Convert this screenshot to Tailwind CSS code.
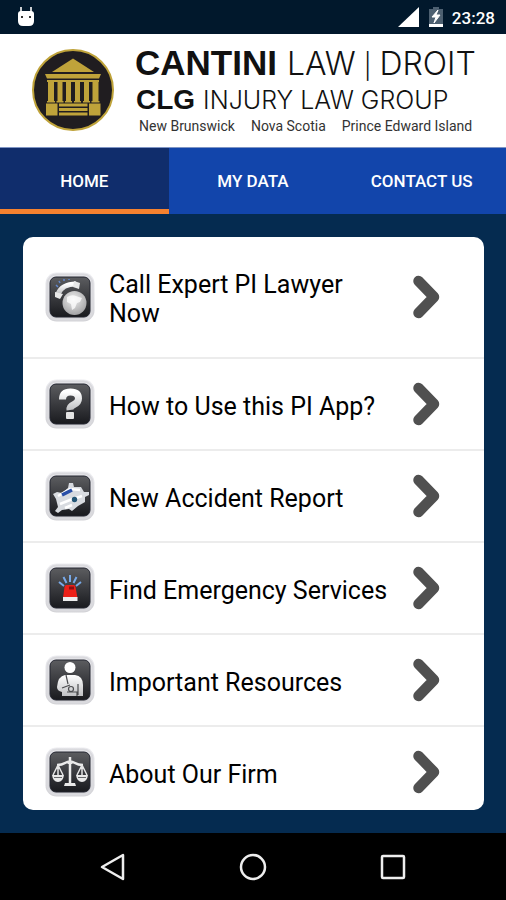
<!DOCTYPE html>
<html lang="en">
<head>
<meta charset="utf-8">
<meta name="viewport" content="width=device-width, initial-scale=1">
<title>Cantini Law</title>
<script src="https://cdn.jsdelivr.net/npm/@tailwindcss/browser@4"></script>
</head>
<body class="h-screen flex flex-col bg-[#052b50] text-black font-['Roboto',sans-serif]">
<svg class="absolute size-0" aria-hidden="true">
  <defs>
    <linearGradient id="rim" x1="0" y1="0" x2="0" y2="1"><stop offset="0" stop-color="#ececf0"/><stop offset="1" stop-color="#d2d2d6"/></linearGradient>
    <linearGradient id="face" x1="0" y1="0" x2="0" y2="1"><stop offset="0" stop-color="#5c5d60"/><stop offset=".48" stop-color="#3b3c40"/><stop offset="1" stop-color="#191a1e"/></linearGradient>
    <linearGradient id="silver" x1="0" y1="0" x2="0" y2="1"><stop offset="0" stop-color="#ffffff"/><stop offset="1" stop-color="#bfc0c3"/></linearGradient>
    <radialGradient id="globe" cx=".45" cy=".35" r=".65"><stop offset="0" stop-color="#eeeeee"/><stop offset="1" stop-color="#a4a4a6"/></radialGradient>
    <symbol id="tile" viewBox="0 0 50 50">
      <rect x=".5" y=".5" width="49" height="49" rx="11" fill="url(#rim)"/>
      <rect x="2.500" y="2.500" width="45" height="45" rx="9" fill="none" stroke="#dadade" stroke-width="2"/>
      <rect x="5" y="5" width="40" height="40" rx="6" fill="url(#face)" stroke="#22242f"/>
    </symbol>
    <symbol id="chevron" viewBox="0 0 28 46">
      <path d="M6.500 7 22 23 6.500 39" fill="none" stroke="#505050" stroke-width="10.500" stroke-linecap="round" stroke-linejoin="round"/>
    </symbol>
  </defs>
</svg>

<div class="h-[34px] shrink-0 flex items-center bg-[#01182c] pl-4 pr-[11px] text-white">
  <svg class="w-5 h-6" viewBox="0 0 20 24" aria-hidden="true">
    <path d="M5 2v5M15 2v5" stroke="#c9cdd1" stroke-width="2"/>
    <path d="M2 9q0-3 3-3h10q3 0 3 3v7q0 5-5 5H7q-5 0-5-5z" fill="#fff"/>
    <path d="M5 12h2M13 12h2" stroke="#333" stroke-width="2"/>
  </svg>
  <svg class="ml-auto w-[22px] h-5" viewBox="0 0 22 20" aria-hidden="true"><path d="M21 0v20H0z" fill="#fff"/></svg>
  <svg class="ml-2 mr-1 w-4 h-[22px]" viewBox="0 0 16 22" aria-hidden="true">
    <path d="M5 1h6v2h4v15H1V3h4z" fill="#4d6071"/><path d="M1 18h14v3H1z" fill="#fff"/>
    <path d="M10 4 4 11h4l-2 6 6-8H8z" fill="#fff" stroke="#fff"/>
  </svg>
  <span class="ml-1 pt-0.5 text-[17px] leading-5 font-medium">23:28</span>
</div>

<header class="h-[113px] shrink-0 flex items-center bg-white pl-[31px] pr-4">
  <svg class="size-[84px] shrink-0" viewBox="0 0 84 84" role="img" aria-label="Cantini Law logo">
    <circle cx="42" cy="41" r="40" fill="#201d20" stroke="#bfa33a" stroke-width="2"/>
    <g fill="#bfa33a">
      <path d="M42 9.500 63 23H21z"/><path d="M14 25h56l-2 4.500H16z"/>
      <path d="M16 31h52v2H16zM17 33h6v20h-6zM26.500 33h5v20h-5zM35 33h5v20h-5zM44 33h5v20h-5zM53 33h5v20h-5zM61.500 33h6v20h-6z"/>
      <path d="M15 54.500h11.500v12H15zM58 54.500h11.500v12H58zM28 54.500h28.500v3H28zM28 59h28.500v3H28zM28 63.500h28.500v3H28z"/>
      <path d="M16 52h8v1.500h-8zM25.500 52h7v1.500h-7zM34 52h7v1.500h-7zM43 52h7v1.500h-7zM52 52h7v1.500h-7zM60.500 52h8v1.500h-8z"/>
    </g>
  </svg>
  <div class="ml-5 whitespace-nowrap text-[#111]">
    <p class="flex items-baseline gap-[10px] text-[35px] leading-9 font-bold font-['Liberation_Sans',Arial,sans-serif]">CANTINI <span class="flex items-baseline gap-2 text-[32px] font-light font-['Inter',sans-serif]"><span>LAW</span><span class="text-[25px]">|</span><span>DROIT</span></span></p>
    <p class="flex items-baseline gap-2 pl-px text-[28px] leading-8 font-bold font-['Liberation_Sans',Arial,sans-serif]">CLG <span class="text-[25px] font-light font-['Inter',sans-serif]">INJURY LAW GROUP</span></p>
    <p class="flex gap-4 pl-1 text-[14px] leading-5 text-[#333]"><span>New Brunswick</span><span>Nova Scotia</span><span>Prince Edward Island</span></p>
  </div>
</header>

<nav class="h-[67px] shrink-0 grid grid-cols-3 bg-[#1245ab] border-t border-[#7f95c4] text-white text-[17px] leading-5 font-medium text-center">
  <a href="#home" aria-current="page" class="flex items-center justify-center bg-[#102d6c] border-b-5 border-[#f5822f] pt-1">HOME</a>
  <a href="#data" class="flex items-center justify-center">MY DATA</a>
  <a href="#contact" class="flex items-center justify-center">CONTACT US</a>
</nav>

<main class="flex-1 min-h-0 pl-[23px] pr-[22px] py-[23px] flex flex-col">
  <ul class="flex-1 min-h-0 overflow-hidden rounded-[10px] bg-white divide-y-2 divide-[#ececec] text-[25px] leading-[29px]">
    <li><a href="#call" class="flex items-center min-h-[120px] pl-[22px] pr-11">
      <svg class="size-[50px] shrink-0" viewBox="0 0 50 50" aria-hidden="true"><use href="#tile"/>
        <circle cx="29.500" cy="31" r="12" fill="url(#globe)"/>
        <path d="M22 25q5-3 9-1l6 2-2 4-3 1-2 5-3 2-1-6-4-2z" fill="#fff" opacity=".75"/>
        <path d="M13 22Q17 12 31 12" fill="none" stroke="url(#silver)" stroke-width="5"/>
        <path d="m10 20 8 2-3 5-5-2zM29 9l6 2-1 6-6-2z" fill="#e8e8e8"/>
        <path d="m11 13 2 2M14 9l1 2M19 7v2M24 7v1" stroke="#6388cd" stroke-width="1.500"/>
      </svg>
      <span class="flex-1 ml-[14px] pt-1">Call Expert PI Lawyer Now</span>
      <svg class="ml-5 w-7 h-[46px] shrink-0" aria-hidden="true"><use href="#chevron"/></svg></a></li>
    <li><a href="#how" class="flex items-center min-h-[90px] pl-[22px] pr-11">
      <svg class="size-[50px] shrink-0" viewBox="0 0 50 50" aria-hidden="true"><use href="#tile"/>
        <path d="M17.500 20.500q0-7.500 8-7.500t8 6.500q0 4-4.500 6t-4 5.500" fill="none" stroke="url(#silver)" stroke-width="7"/>
        <rect x="21" y="33" width="8" height="7" rx="1" fill="#e4e4e4"/>
      </svg>
      <span class="flex-1 ml-[14px] pt-1">How to Use this PI App?</span>
      <svg class="ml-5 w-7 h-[46px] shrink-0" aria-hidden="true"><use href="#chevron"/></svg></a></li>
    <li><a href="#report" class="flex items-center min-h-[90px] pl-[22px] pr-11">
      <svg class="size-[50px] shrink-0" viewBox="0 0 50 50" aria-hidden="true"><use href="#tile"/>
        <path d="m8 23 4-2 5 1 6-5 1-5 4 0 1 4 7 0 3 5 5 0 0 3-4 2 0 5-7 4-6 5-3-2-7 1-4 3-3-2 3-4-2-8z" fill="#d8dbe0"/>
        <path d="m13 25 12-7 10 1M15 33l10-4 12-4M20 37l7-3" fill="none" stroke="#fff" stroke-width="2.500"/>
        <path d="m17 24 10-5" stroke="#294fa8" stroke-width="3.500"/>
        <circle cx="29.500" cy="28.500" r="2.700" fill="#235575"/>
      </svg>
      <span class="flex-1 ml-[14px] pt-1">New Accident Report</span>
      <svg class="ml-5 w-7 h-[46px] shrink-0" aria-hidden="true"><use href="#chevron"/></svg></a></li>
    <li><a href="#emergency" class="flex items-center min-h-[90px] pl-[22px] pr-11">
      <svg class="size-[50px] shrink-0" viewBox="0 0 50 50" aria-hidden="true"><use href="#tile"/>
        <path d="m14 19 5 4M18.500 14l3 6M25 12v7M31.500 14l-3 6M36 19l-5 4" stroke="#78a9e8" stroke-width="2"/>
        <path d="M19.500 24q0-2 2-2h7q2 0 2 2l2 11H18z" fill="#ec2018"/><path d="M24 25h5" stroke="#8e0e12" stroke-width="3"/>
        <path d="M18 34h14.500v4H18z" fill="#ededed"/>
      </svg>
      <span class="flex-1 ml-[14px] pt-1">Find Emergency Services</span>
      <svg class="ml-5 w-7 h-[46px] shrink-0" aria-hidden="true"><use href="#chevron"/></svg></a></li>
    <li><a href="#resources" class="flex items-center min-h-[90px] pl-[22px] pr-11">
      <svg class="size-[50px] shrink-0" viewBox="0 0 50 50" aria-hidden="true"><use href="#tile"/>
        <circle cx="25" cy="12.500" r="5.500" fill="#fff"/>
        <path d="M20 20h10q8 1 8 10v11H17v-4q-5-1-5-5 1-11 8-12z" fill="url(#silver)"/>
        <path d="m21 20 2 9M17 33l8-3M22 37h10v4M33 29v11" fill="none" stroke="#4b4c4f" stroke-width="1.200"/>
        <circle cx="26" cy="34" r="2.500" fill="none" stroke="#4b4c4f" stroke-width="1.200"/>
      </svg>
      <span class="flex-1 ml-[14px] pt-1">Important Resources</span>
      <svg class="ml-5 w-7 h-[46px] shrink-0" aria-hidden="true"><use href="#chevron"/></svg></a></li>
    <li><a href="#about" class="flex items-center min-h-[90px] pl-[22px] pr-11">
      <svg class="size-[50px] shrink-0" viewBox="0 0 50 50" aria-hidden="true"><use href="#tile"/>
        <path d="M25 10v27M12 18q5 0 8-2 5-3 10 0 3 2 8 2" fill="none" stroke="#ececec" stroke-width="2.500"/>
        <path d="m13 18-5 10M13 18l5 10M13 18v10M37 18l-5 10M37 18l5 10M37 18v10" stroke="#e4e4e4" stroke-width="1.500"/>
        <path d="M7 28h12q-1 7-6 7t-6-7M31 28h12q-1 7-6 7t-6-7M20 36h10l1 3H19zM22.500 14h5v3h-5z" fill="#e9e9e9"/>
        <path d="M9 30.500h8M33 30.500h8" stroke="#66676a"/>
      </svg>
      <span class="flex-1 ml-[14px] pt-1">About Our Firm</span>
      <svg class="ml-5 w-7 h-[46px] shrink-0" aria-hidden="true"><use href="#chevron"/></svg></a></li>
  </ul>
</main>

<footer class="h-[67px] shrink-0 flex items-center justify-center gap-[112px] bg-black">
  <button type="button" aria-label="Back"><svg class="size-7" viewBox="0 0 28 28"><path d="M24 2v24L3 14z" fill="none" stroke="#eee" stroke-width="2.500" stroke-linejoin="round"/></svg></button>
  <button type="button" aria-label="Home"><svg class="size-7" viewBox="0 0 28 28"><circle cx="14" cy="14" r="12" fill="none" stroke="#eee" stroke-width="2.500"/></svg></button>
  <button type="button" aria-label="Recent apps"><svg class="size-7" viewBox="0 0 28 28"><rect x="3" y="3" width="22" height="22" rx="1" fill="none" stroke="#eee" stroke-width="2.500"/></svg></button>
</footer>
</body>
</html>
